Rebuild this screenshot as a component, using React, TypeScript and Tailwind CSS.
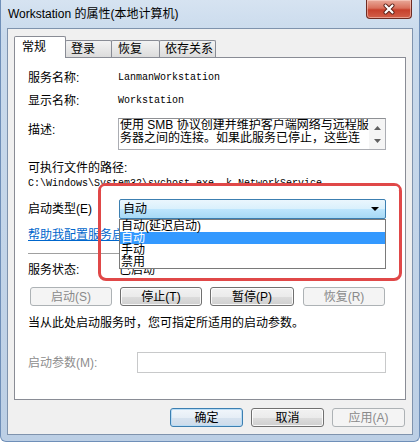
import type { ReactNode } from "react";

const cjk = "font-['Liberation_Sans','Noto_Sans_CJK_SC',sans-serif]";
const mono = "font-['Liberation_Mono','Noto_Sans_CJK_SC',monospace]";

type BtnProps = {
  children: ReactNode;
  width: string;
  disabled?: boolean;
  primary?: boolean;
  className?: string;
};

const WinButton = ({ children, width, disabled, primary, className = "" }: BtnProps) => {
  let look =
    "border-[#707070] text-black bg-[linear-gradient(#f2f2f2_0%,#ebebeb_50%,#dddddd_50%,#cfcfcf_100%)] shadow-[inset_0_0_0_1px_rgba(255,255,255,0.85)]";
  if (disabled) look = "border-[#adb2b5] text-[#8a8a8a] bg-[#f4f4f4]";
  if (primary)
    look =
      "border-[#3c7fb1] text-black bg-[linear-gradient(#f1f6fb_0%,#e6eef6_50%,#d7e3ef_50%,#cddbea_100%)] shadow-[inset_0_0_0_1px_#b9dcf5]";
  return (
    <div
      className={`${width} h-[19px] flex items-center justify-center rounded-[3px] border text-[12px] leading-[14px] ${look} ${className}`}
    >
      {children}
    </div>
  );
};

export default function App() {
  return (
    <div
      className={`${cjk} w-[420px] h-[442px] flex flex-col px-[6px] pb-[6px] border-x border-b border-[#6f8fb8] rounded-b-[6px] bg-[linear-gradient(#d6e3f1_0%,#c9daec_8%,#bccfe5_100%)] text-black`}
    >
      {/* title bar */}
      <div className="h-[28px] flex justify-between items-start">
        <div className="ml-[1px] pt-[6px] text-[12px] leading-[16px] text-black">
          Workstation 的属性(本地计算机)
        </div>
        <div className="mr-[1px] w-[46px] h-[19px] rounded-b-[4px] border border-t-0 border-[#6e2b22] bg-[linear-gradient(#e9a99a_0%,#d9705c_45%,#c7402c_55%,#d2604a_100%)] shadow-[inset_0_0_0_1px_rgba(255,220,210,0.5)] flex items-center justify-center">
          <svg width="14" height="12" viewBox="0 0 14 12">
            <path d="M3.5 2.5 L10.5 9.5 M10.5 2.5 L3.5 9.5" stroke="#5a2018" strokeWidth="4" strokeLinecap="round" />
            <path d="M3.5 2.5 L10.5 9.5 M10.5 2.5 L3.5 9.5" stroke="#ffffff" strokeWidth="2.2" strokeLinecap="round" />
          </svg>
        </div>
      </div>

      {/* client area */}
      <div className="flex-1 border border-[#7f93ad] bg-[#f0f0f0] px-[6px] pt-[7px] flex flex-col">
        {/* tabs */}
        <div className="h-[21px] flex items-end">
          <div className="relative z-10 w-[52px] h-[22px] -mb-[1px] border border-b-0 border-[#898c95] bg-white rounded-t-[2px] pl-[7px] pt-[3px] text-[12px] leading-[14px]">
            常规
          </div>
          <div className="-ml-[1px] w-[47px] h-[17px] border border-b-0 border-[#898c95] rounded-t-[2px] bg-[linear-gradient(#f3f3f3,#dcdcdc)] pl-[5px] pt-[1px] text-[12px] leading-[14px]">
            登录
          </div>
          <div className="-ml-[1px] w-[49px] h-[17px] border border-b-0 border-[#898c95] rounded-t-[2px] bg-[linear-gradient(#f3f3f3,#dcdcdc)] pl-[6px] pt-[1px] text-[12px] leading-[14px]">
            恢复
          </div>
          <div className="-ml-[1px] w-[57px] h-[17px] border border-b-0 border-[#898c95] rounded-t-[2px] bg-[linear-gradient(#f3f3f3,#dcdcdc)] pl-[5px] pt-[1px] text-[12px] leading-[14px]">
            依存关系
          </div>
        </div>

        {/* tab page */}
        <div className="relative w-[392px] h-[343px] border border-[#898c95] bg-white pl-[13px] flex flex-col text-[12px] leading-[14px]">
          <div className="mt-[13px] h-[14px] flex items-center">
            <div className="w-[90px]">服务名称:</div>
            <div className={`${mono} text-[10px]`}>LanmanWorkstation</div>
          </div>
          <div className="mt-[9px] h-[14px] flex items-center">
            <div className="w-[90px]">显示名称:</div>
            <div className={`${mono} text-[10px]`}>Workstation</div>
          </div>
          <div className="mt-[10px] h-[32px] flex items-start">
            <div className="w-[90px] mt-[5px]">描述:</div>
            <div className="w-[268px] h-[32px] border border-[#abadb3] border-t-[#8e9094] flex bg-white">
              <div className="flex-1 overflow-hidden pl-[1px] leading-[13px] whitespace-nowrap">
                <div>使用 SMB 协议创建并维护客户端网络与远程服</div>
                <div>务器之间的连接。如果此服务已停止，这些连</div>
              </div>
              <div className="w-[16px] bg-[#f5f5f5] flex flex-col items-center justify-around py-[2px]">
                <svg width="7" height="4" viewBox="0 0 7 4">
                  <path d="M0 4 L3.5 0 L7 4 Z" fill="#606060" />
                </svg>
                <svg width="7" height="4" viewBox="0 0 7 4">
                  <path d="M0 0 L7 0 L3.5 4 Z" fill="#606060" />
                </svg>
              </div>
            </div>
          </div>
          <div className="mt-[11px] h-[14px]">可执行文件的路径:</div>
          <div className={`${mono} mt-[3px] h-[11px] text-[10px] leading-[11px] whitespace-nowrap`}>
            C:\Windows\System32\svchost.exe -k NetworkService
          </div>

          <div className="mt-[10px] h-[20px] flex items-center">
            <div className="w-[91px]">启动类型(E)</div>
            <div className="relative z-10 w-[267px] h-[20px]">
              <div className="h-full rounded-[2px] border border-[#3c7fb1] bg-[linear-gradient(#eaf6fd_0%,#d9f0fc_50%,#bee6fd_50%,#a7d9f5_100%)] flex items-center justify-between pl-[3px] pr-[6px]">
                <span>自动</span>
                <svg width="8" height="4" viewBox="0 0 8 4">
                  <path d="M0 0 L8 0 L4 4 Z" fill="#000" />
                </svg>
              </div>
              <div className="absolute left-0 top-full w-full h-[50px] border border-[#7a7a7a] bg-white leading-[12px]">
                <div className="h-[12px] pl-[1px]">自动(延迟启动)</div>
                <div className="h-[12px] pl-[1px] bg-[#3399ff] text-white">自动</div>
                <div className="h-[12px] pl-[1px]">手动</div>
                <div className="h-[12px] pl-[1px]">禁用</div>
              </div>
            </div>
          </div>

          <div className="mt-[9px] h-[14px] text-[#0066cc] underline whitespace-nowrap">帮助我配置服务启动选项。</div>
          <div className="mt-[11px] w-[358px] h-[1px] bg-[#a0a0a0]" />

          <div className="mt-[9px] h-[14px] flex items-center">
            <div className="w-[91px]">服务状态:</div>
            <div>已启动</div>
          </div>

          <div className="mt-[10px] ml-[2px] flex">
            <WinButton width="w-[82px]" disabled>启动(S)</WinButton>
            <WinButton width="w-[82px]" className="ml-[8px]">停止(T)</WinButton>
            <WinButton width="w-[84px]" className="ml-[8px]">暂停(P)</WinButton>
            <WinButton width="w-[82px]" className="ml-[9px]" disabled>恢复(R)</WinButton>
          </div>

          <div className="mt-[10px] h-[14px] whitespace-nowrap">当从此处启动服务时，您可指定所适用的启动参数。</div>

          <div className="mt-[22px] h-[21px] flex items-center">
            <div className="w-[109px] text-[#8d8d8d]">启动参数(M):</div>
            <div className="w-[249px] h-[21px] border border-[#c8c9ca] bg-white" />
          </div>

          {/* red highlight frame */}
          <div className="absolute left-[83px] top-[125px] w-[304px] h-[98px] border-[3px] border-[#e04848] rounded-[8px] z-20">
            <div className="h-[4px] bg-white rounded-t-[5px]" />
          </div>
        </div>

        {/* dialog buttons */}
        <div className="mt-[8px] flex justify-end pr-[1px]">
          <WinButton width="w-[73px]" primary>确定</WinButton>
          <WinButton width="w-[73px]" className="ml-[8px]">取消</WinButton>
          <WinButton width="w-[73px]" className="ml-[8px]" disabled>应用(A)</WinButton>
        </div>
      </div>
    </div>
  );
}
